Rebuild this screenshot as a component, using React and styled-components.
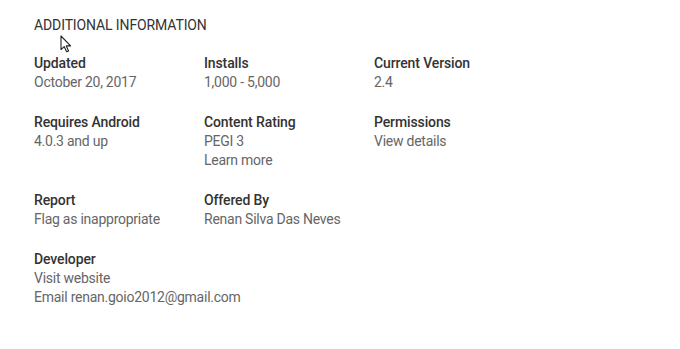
import React from "react";
import styled, { createGlobalStyle } from "styled-components";

const GlobalStyle = createGlobalStyle`
  html, body {
    margin: 0;
    padding: 0;
    background: #fff;
  }
  body {
    font-family: Roboto, "Liberation Sans", Arial, sans-serif;
    -webkit-font-smoothing: antialiased;
  }
`;

const rows = [
  [
    { label: "Updated", values: ["October 20, 2017"] },
    { label: "Installs", values: ["1,000 - 5,000"] },
    { label: "Current Version", values: ["2.4"] },
  ],
  [
    { label: "Requires Android", values: ["4.0.3 and up"] },
    { label: "Content Rating", values: ["PEGI 3", "Learn more"] },
    { label: "Permissions", values: ["View details"] },
  ],
  [
    { label: "Report", values: ["Flag as inappropriate"] },
    { label: "Offered By", values: ["Renan Silva Das Neves"] },
  ],
  [
    {
      label: "Developer",
      values: ["Visit website", "Email renan.goio2012@gmail.com"],
    },
  ],
];

function Cursor() {
  return (
    <Pointer width="13" height="18" viewBox="0 0 13 18">
      <path
        d="M1 1 L1 14.5 L4.2 11.6 L6.6 16.8 L8.6 15.9 L6.3 10.9 L10.6 10.9 Z"
        fill="#fff"
        stroke="#222"
        strokeWidth="1.1"
        strokeLinejoin="round"
      />
    </Pointer>
  );
}

function App() {
  return (
    <Page>
      <GlobalStyle />
      <Title>ADDITIONAL INFORMATION</Title>
      <Grid>
        {rows.map((row, i) =>
          row.map((item, j) => (
            <Item key={`${i}-${j}`} style={{ gridRow: i + 1, gridColumn: j + 1 }}>
              <Label>{item.label}</Label>
              {item.values.map((v) => (
                <Value key={v}>{v}</Value>
              ))}
            </Item>
          ))
        )}
      </Grid>
      <Cursor />
    </Page>
  );
}

const Page = styled.div`
  position: relative;
  width: 680px;
  height: 349px;
  padding: 16px 0 0 34px;
  box-sizing: border-box;
`;

const Title = styled.div`
  font-size: 14px;
  line-height: 18px;
  color: #333;
  letter-spacing: -0.12px;
`;

const Grid = styled.div`
  display: grid;
  grid-template-columns: 170px 170px 170px;
  row-gap: 19.5px;
  margin-top: 19px;
`;

const Item = styled.div`
  display: flex;
  flex-direction: column;
`;

const Label = styled.div`
  font-size: 14px;
  font-weight: 500;
  line-height: 20px;
  color: #333;
  letter-spacing: -0.12px;
  white-space: nowrap;
`;

const Value = styled.div`
  font-size: 14px;
  line-height: 19.3px;
  color: #666;
  letter-spacing: -0.25px;
  white-space: nowrap;
`;

const Pointer = styled.svg`
  position: absolute;
  left: 60px;
  top: 35px;
`;

export default App;
